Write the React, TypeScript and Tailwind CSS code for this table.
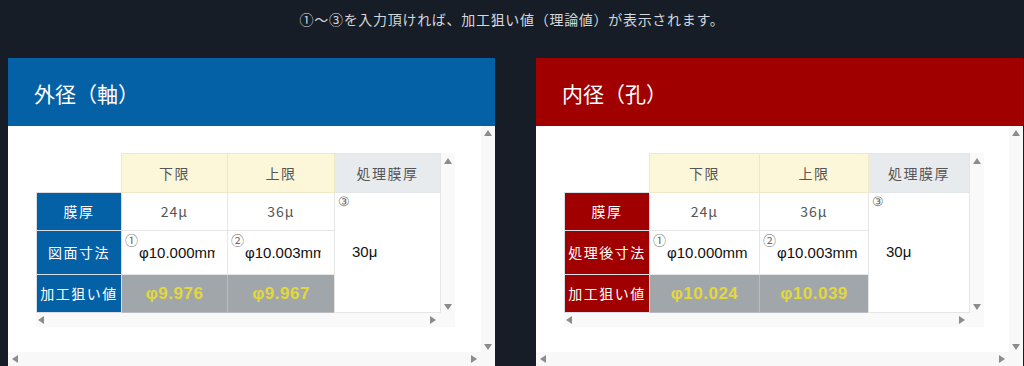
import React from "react";

type Panel = {
  title: string;
  header: string;
  sizeLabel: string;
  lower: string;
  upper: string;
  cols: string[];
  inputWidth: string;
};

const panels: Panel[] = [
  {
    title: "外径（軸）",
    header: "bg-[#0561a6]",
    sizeLabel: "図面寸法",
    lower: "φ9.976",
    upper: "φ9.967",
    cols: ["w-[85px]", "w-[106px]", "w-[107px]", "w-[106px]"],
    inputWidth: "w-[76px]",
  },
  {
    title: "内径（孔）",
    header: "bg-[#a00000]",
    sizeLabel: "処理後寸法",
    lower: "φ10.024",
    upper: "φ10.039",
    cols: ["w-[85px]", "w-[110px]", "w-[109px]", "w-[101px]"],
    inputWidth: "w-[84px]",
  },
];

const Up = () => (
  <span className="block h-0 w-0 border-x-[4px] border-b-[6px] border-x-transparent border-b-[#8c8c8c]" />
);
const Down = () => (
  <span className="block h-0 w-0 border-x-[4px] border-t-[6px] border-x-transparent border-t-[#8c8c8c]" />
);
const Left = () => (
  <span className="block h-0 w-0 border-y-[4px] border-r-[6px] border-y-transparent border-r-[#8c8c8c]" />
);
const Right = () => (
  <span className="block h-0 w-0 border-y-[4px] border-l-[6px] border-y-transparent border-l-[#8c8c8c]" />
);

function Mark({ n }: { n: string }) {
  return (
    <span className="absolute left-[3px] top-[2px] text-[13px] leading-none text-[#666]">{n}</span>
  );
}

function CalcTable({ p }: { p: Panel }) {
  const rowHead = `${p.header} border border-[#d9dee4] text-center text-[14px] tracking-[1.5px] text-white`;
  const cell = "border border-[#e6e6e6] bg-white";
  return (
    <div className="grid w-fit grid-cols-[auto_14px] grid-rows-[auto_14px] bg-white">
      <table className="table-fixed border-collapse">
        <colgroup>
          {p.cols.map((c, i) => (
            <col key={i} className={c} />
          ))}
        </colgroup>
        <tbody>
          <tr className="h-[39px]">
            <td className="border-0 bg-white" />
            <td className="border border-[#efe9c8] bg-[#fdf7d9] text-center text-[14px] tracking-[1.5px] text-[#555]">下限</td>
            <td className="border border-[#efe9c8] bg-[#fdf7d9] text-center text-[14px] tracking-[1.5px] text-[#555]">上限</td>
            <td className="border border-[#e3e6e9] bg-[#e8ebee] text-center text-[14px] tracking-[1.5px] text-[#555]">処理膜厚</td>
          </tr>
          <tr className="h-[38px]">
            <td className={rowHead}>膜厚</td>
            <td className={`${cell} text-center text-[14px] tracking-[1px] text-[#555]`}>24μ</td>
            <td className={`${cell} text-center text-[14px] tracking-[1px] text-[#555]`}>36μ</td>
            <td rowSpan={3} className={`${cell} relative pl-[17px] font-['Liberation_Sans',sans-serif] text-[15px] text-[#111]`}>
              <Mark n="③" />
              30μ
            </td>
          </tr>
          <tr className="h-[44px]">
            <td className={rowHead}>{p.sizeLabel}</td>
            {["①", "②"].map((n, i) => (
              <td key={n} className={`${cell} relative`}>
                <Mark n={n} />
                <span
                  className={`${p.inputWidth} ml-[17px] mt-[2px] block overflow-hidden whitespace-nowrap font-['Liberation_Sans',sans-serif] text-[15px] text-[#111]`}
                >
                  {i === 0 ? "φ10.000mm" : "φ10.003mm"}
                </span>
              </td>
            ))}
          </tr>
          <tr className="h-[38px]">
            <td className={rowHead}>加工狙い値</td>
            {[p.lower, p.upper].map((v) => (
              <td
                key={v}
                className="border border-[#b9bdc1] bg-[#a1a6ab] text-center font-['Liberation_Sans',sans-serif] text-[17px] font-bold tracking-[0.5px] text-[#e3d83a]"
              >
                {v}
              </td>
            ))}
          </tr>
        </tbody>
      </table>
      <div className="flex flex-col items-center justify-between bg-[#f9f9f9] pb-[3px] pt-[5px]">
        <Up />
        <Down />
      </div>
      <div className="flex items-center justify-between bg-[#f9f9f9] pl-[2px] pr-[5px]">
        <Left />
        <Right />
      </div>
      <div className="bg-[#f9f9f9]" />
    </div>
  );
}

function PanelCard({ p }: { p: Panel }) {
  return (
    <section className="flex w-[487px] flex-col">
      <div className={`${p.header} flex h-[68px] items-center pl-[26px] pt-[3px] text-[21px] text-white`}>
        {p.title}
      </div>
      <div className="grid h-[240px] grid-cols-[1fr_14px] grid-rows-[1fr_14px] bg-white">
        <div className="pl-[28px] pt-[27px]">
          <CalcTable p={p} />
        </div>
        <div className="flex flex-col items-center justify-between bg-[#f8f8f8] pb-[2px] pt-[4px]">
          <Up />
          <Down />
        </div>
        <div className="flex items-center justify-between bg-[#f8f8f8] pl-[4px] pr-[4px]">
          <Left />
          <Right />
        </div>
        <div className="bg-[#f8f8f8]" />
      </div>
    </section>
  );
}

export default function App() {
  return (
    <div className="h-[366px] overflow-hidden bg-[#161d26] pt-[10px] font-['Noto_Sans_CJK_JP','Noto_Sans',sans-serif]">
      <p className="h-[18px] text-center text-[14px] leading-[18px] tracking-[0.7px] text-[#d4d7db]">
        ①〜③を入力頂ければ、加工狙い値（理論値）が表示されます。
      </p>
      <div className="mt-[30px] flex gap-[41px] pl-[8px]">
        {panels.map((p) => (
          <PanelCard key={p.title} p={p} />
        ))}
      </div>
    </div>
  );
}
